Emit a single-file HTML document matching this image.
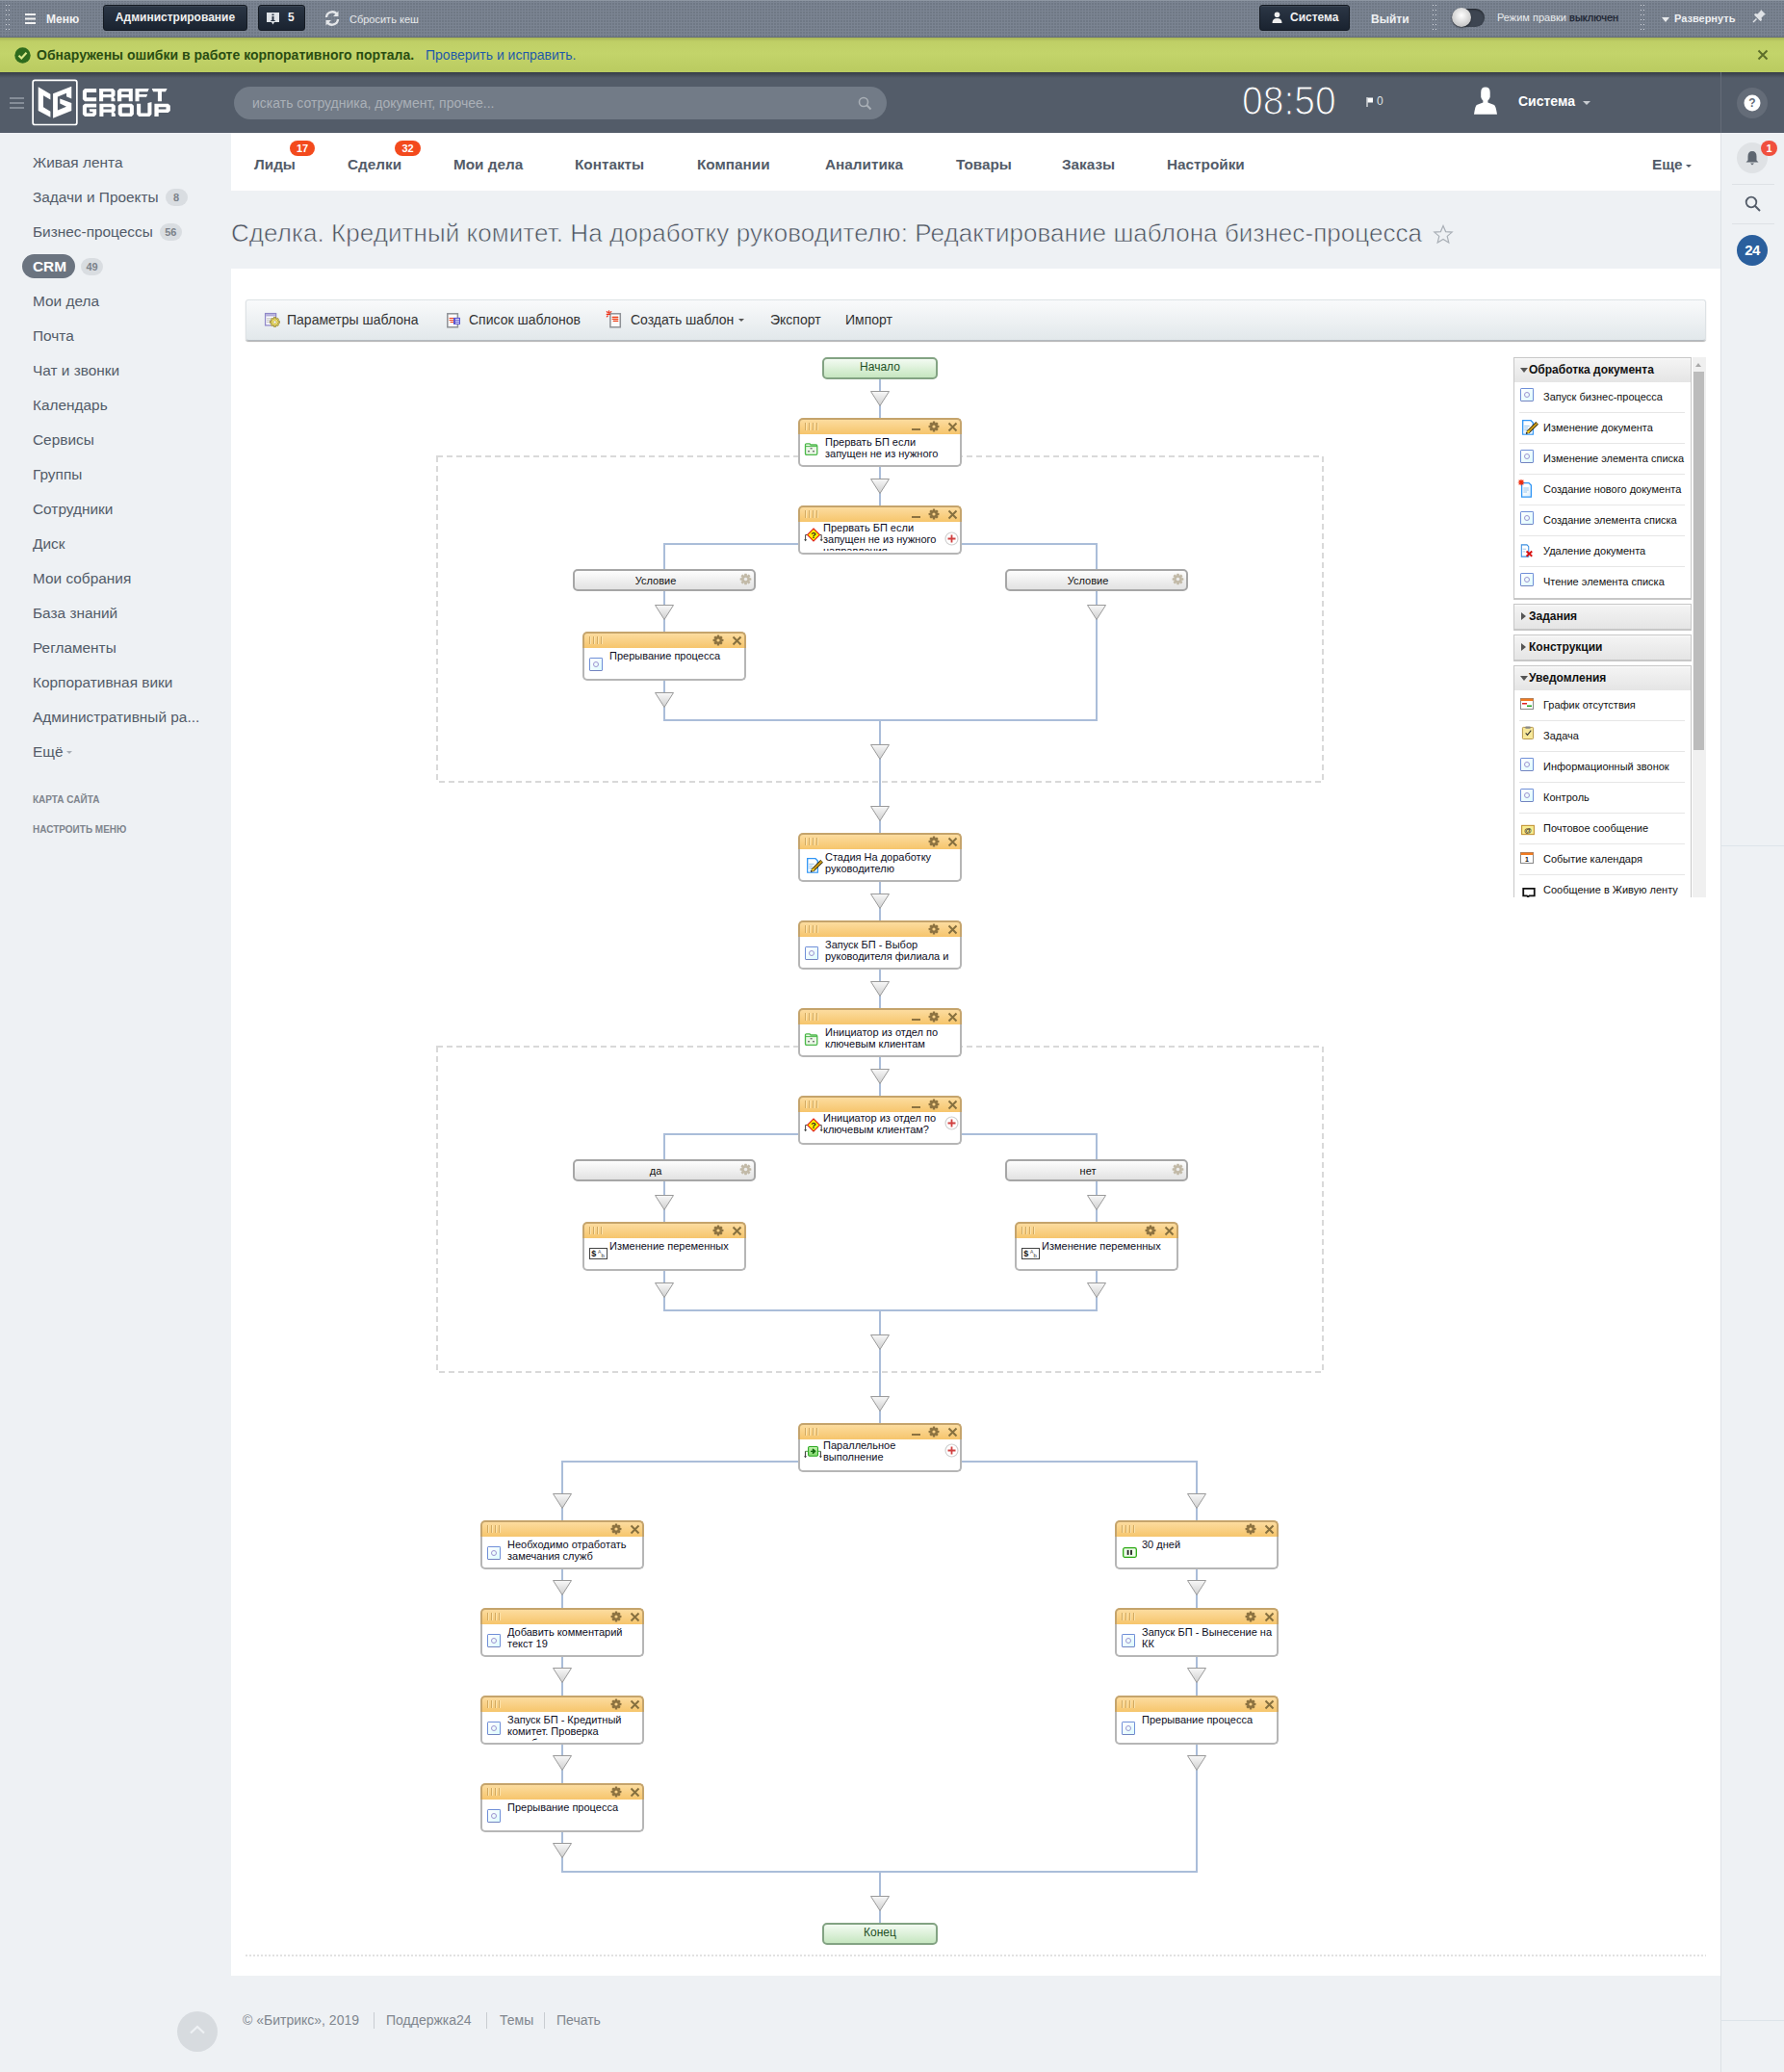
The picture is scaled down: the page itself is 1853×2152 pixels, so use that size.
<!DOCTYPE html>
<html><head><meta charset="utf-8">
<style>
*{box-sizing:border-box;margin:0;padding:0}
html,body{width:1853px;height:2152px;overflow:hidden}
body{background:#eef1f4;font-family:"Liberation Sans",sans-serif;position:relative}
.abs{position:absolute}
/* top admin panel */
#tp{position:absolute;left:0;top:0;width:1853px;height:39px;box-shadow:inset 0 1px 0 #8d96a2;background-color:#7b8492;
 background-image:radial-gradient(circle at 1px 1px,#6f7885 0.8px,transparent 1px);background-size:3px 3px;border-bottom:1px solid #666f7b}
.tpsep{position:absolute;top:3px;width:5px;height:32px;background-image:radial-gradient(circle,rgba(225,228,232,0.85) 0.75px,transparent 1px);background-size:3px 5px}
.dbtn{position:absolute;top:5px;height:27px;background:linear-gradient(#2b3645,#1a2330);border-radius:3px;border:1px solid #141a22;box-shadow:inset 0 1px 0 rgba(255,255,255,0.08);color:#f0f0f0;font-weight:bold;font-size:12px;line-height:25px}
.tptx{position:absolute;color:#e6e8ea;font-size:12px}
/* green bar */
#gb{position:absolute;left:0;top:39px;width:1853px;height:36px;background:linear-gradient(#a7b457 0,#bfcf66 4px,#c3d46a 45%,#bacb60 100%);box-shadow:0 1px 2px rgba(0,0,0,0.25)}
/* header */
#hd{position:absolute;left:0;top:75px;width:1853px;height:63px;background:#535c69}
#hd:before{content:"";position:absolute;left:0;top:0;right:0;height:6px;background:linear-gradient(rgba(30,35,42,0.55),rgba(30,35,42,0))}
/* sidebar */
.mi{position:absolute;left:34px;font-size:15.4px;color:#535c69;line-height:22px;white-space:nowrap}
.cnt{display:inline-block;vertical-align:top;margin-left:7px;margin-top:2px;height:18px;line-height:18px;min-width:23px;text-align:center;padding:0 5px;border-radius:9px;background:#d9dde1;color:#7c828a;font-size:11px;font-weight:bold}
/* nav */
#nav{position:absolute;left:240px;top:138px;width:1547px;height:60px;background:#fff}
.ni{position:absolute;top:24px;font-size:15.3px;font-weight:bold;color:#535c69;line-height:18px;white-space:nowrap}
.badge{position:absolute;height:16px;border-radius:8px;background:#f34a1d;color:#fff;font-size:11px;font-weight:bold;line-height:16px;text-align:center}
/* right panel */
#rp{position:absolute;left:1787px;top:138px;width:66px;height:2014px;border-left:1px solid #dde1e5;background:#eef1f4}
/* content */
#ct{position:absolute;left:240px;top:279px;width:1547px;height:1773px;background:#fff}
#tb{position:absolute;left:255px;top:311px;width:1517px;height:43px;border-radius:3px;background:linear-gradient(#f9fafb,#e2e8eb);border:1px solid #dde2e5;border-bottom-color:#b4babf;box-shadow:0 1px 1px rgba(0,0,0,0.3)}
.tbi{position:absolute;top:12px;font-size:14px;color:#333;white-space:nowrap;line-height:16px}
/* palette */
#pal{position:absolute;left:1572px;top:371px;width:200px;height:561px;overflow:hidden}
.pg{position:absolute;left:0;width:185px;border:1px solid #c7c7c7;border-bottom-width:2px;background:#fff}
.ph{height:25px;background:linear-gradient(#fafafa,#f3f3f3 2px,#e5e5e5);font-size:12px;font-weight:bold;color:#111;line-height:25px;padding-left:15px;position:relative;white-space:nowrap}
.ph i{position:absolute;left:6px;top:10px;width:0;height:0;border-left:4px solid transparent;border-right:4px solid transparent;border-top:5px solid #555}
.ph i.r{left:7px;top:8px;border-top:4px solid transparent;border-bottom:4px solid transparent;border-left:5px solid #555;border-right:0}
.pi{position:relative;height:32px;margin:0 6px 0 5px;border-bottom:1px solid #e6e6e6;font-size:11px;color:#111;line-height:30px;padding-left:25px;white-space:nowrap}
.pi:last-child{border-bottom:0}
.pic{position:absolute;left:2px;top:5px;width:14px;height:14px}
/* diagram */
.dsvg{position:absolute;left:0;top:0}
.box{position:absolute;width:170px;height:51px}
.bh{position:absolute;left:0;top:0;width:170px;height:17px;border:2px solid #c5a46c;border-bottom:0;border-radius:5px 5px 0 0;background:linear-gradient(#fcdc9f,#f6c56c)}
.bh s{position:absolute;top:3px;width:1px;height:8px;background:#d2aa62;box-shadow:1px 0 0 #fde4ac}
.bh .mn{position:absolute;left:116px;top:9px;width:9px;height:2px;background:#8c7240}
.gi{position:absolute}
.bh .gi{margin-left:-2px;margin-top:-2px}
.cl{position:absolute;left:153px;top:2px}
.bb{position:absolute;left:0;top:17px;width:170px;height:34px;border:2px solid #b6b6b6;border-top:0;border-radius:0 0 5px 5px;background:#fff}
.bt{position:absolute;left:28px;top:19px;width:137px;height:28px;overflow:hidden;font-size:11px;line-height:12px;color:#0e0e1e}
.bt2{left:26px;top:16.5px;width:124px;height:30px}
.ic{position:absolute}
.ic-blue{position:absolute;left:7px;top:27px;width:14px;height:14px;border:1px solid #6f8fd8;border-bottom-color:#7384c0;background:linear-gradient(135deg,#fff,#ddfbfd);border-radius:1.5px}
.ic-blue b{position:absolute;left:3px;top:3px;width:6px;height:6px;border:1px solid #9d94d0;border-radius:50%}
.pl{position:absolute;left:152px;top:28px}
.cond{position:absolute;width:190px;height:23px;border:2px solid #a6a6a6;border-radius:5px;background:linear-gradient(#fdfdfd,#e2e2e2);font-size:11px;color:#111;line-height:21px}
.cond span{position:absolute;left:0;width:168px;text-align:center;top:0}
.cond .gi{margin-left:-2px;margin-top:-1px}
.se{position:absolute;width:120px;border:2px solid #83a383;border-radius:5px;background:linear-gradient(#f3fbf2,#c6e6c0);font-size:12px;color:#1d4f24;text-align:center;line-height:17px!important}
/* footer */
.ft{position:absolute;top:2090px;font-size:14px;color:#80868e;white-space:nowrap;line-height:17px}
.fsep{position:absolute;top:2090px;width:1px;height:17px;background:#c9cdd1}
</style></head><body>

<!-- top admin panel -->
<div id="tp">
 <div class="tpsep" style="left:5px"></div>
 <svg class="abs" style="left:26px;top:14px" width="12" height="11" viewBox="0 0 12 11"><rect y="0" width="11" height="2" fill="#f2f2f2"/><rect y="4.5" width="11" height="2" fill="#f2f2f2"/><rect y="9" width="11" height="2" fill="#f2f2f2"/></svg>
 <div class="tptx" style="left:48px;top:13px;font-weight:bold;font-size:12px;color:#f2f2f2">Меню</div>
 <div class="dbtn" style="left:107px;width:150px;text-align:center">Администрирование</div>
 <div class="dbtn" style="left:268px;width:49px"><svg class="abs" style="left:7px;top:6px" width="15" height="15" viewBox="0 0 15 15"><path d="M1 1 H14 V11 H9 L7.5 13.5 L6 11 H1 Z" fill="#dfe3e7"/><rect x="6.5" y="5" width="2" height="5" fill="#2a3544"/><rect x="6.5" y="2.5" width="2" height="1.6" fill="#2a3544"/><rect x="5.3" y="9" width="4.4" height="1" fill="#2a3544"/></svg><span class="abs" style="left:30px;top:0px;font-size:12px">5</span></div>
 <svg class="abs" style="left:336px;top:10px" width="18" height="18" viewBox="0 0 18 18"><path d="M3 8 A6 6 0 0 1 14 5" stroke="#e4e6e9" stroke-width="2.3" fill="none"/><path d="M15.5 1.5 V7 H10 Z" fill="#e4e6e9"/><path d="M15 10 A6 6 0 0 1 4 13" stroke="#e4e6e9" stroke-width="2.3" fill="none"/><path d="M2.5 16.5 V11 H8 Z" fill="#e4e6e9"/></svg>
 <div class="tptx" style="left:363px;top:14px;font-size:11px">Сбросить кеш</div>

 <div class="dbtn" style="left:1308px;width:94px"><svg class="abs" style="left:12px;top:6px" width="11" height="12" viewBox="0 0 11 12"><circle cx="5.5" cy="3.2" r="2.8" fill="#eee"/><path d="M0.5 12 Q0.5 7 5.5 7 Q10.5 7 10.5 12 Z" fill="#eee"/></svg><span class="abs" style="left:31px;top:0px;font-size:12px">Система</span></div>
 <div class="tptx" style="left:1424px;top:13px;font-weight:bold;font-size:12px;color:#eef0f2">Выйти</div>
 <div class="tpsep" style="left:1487px"></div>
 <div class="abs" style="left:1508px;top:9px;width:34px;height:19px;border-radius:10px;background:#3d4551;box-shadow:inset 0 1px 2px rgba(0,0,0,0.5)"></div>
 <div class="abs" style="left:1508px;top:8px;width:20px;height:20px;border-radius:50%;background:radial-gradient(circle at 50% 40%,#ffffff,#c9c9c9 70%,#a9a9a9);box-shadow:0 1px 2px rgba(0,0,0,0.5)"></div>
 <div class="tptx" style="left:1555px;top:12px;font-size:11px;color:#e8eaec">Режим правки <span style="color:#1a2230;-webkit-text-stroke:0.25px #1a2230">выключен</span></div>
 <div class="tpsep" style="left:1703px"></div>
 <div class="abs" style="left:1726px;top:18px;width:0;height:0;border-left:4px solid transparent;border-right:4px solid transparent;border-top:5px solid #e8eaec"></div>
 <div class="tptx" style="left:1739px;top:13px;font-weight:bold;font-size:11px;color:#eef0f2">Развернуть</div>
 <svg class="abs" style="left:1820px;top:9px" width="15" height="15" viewBox="0 0 15 15"><path d="M9 1 L14 6 L12.5 6.5 L9.5 9.5 L10 12 L8.5 13 L2 6.5 L3 5 L5.5 5.5 L8.5 2.5 Z" fill="#dfe2e6"/><path d="M4.5 10.5 L1 14" stroke="#dfe2e6" stroke-width="1.5"/></svg>
</div>

<!-- green bar -->
<div id="gb">
 <svg class="abs" style="left:15px;top:10px" width="17" height="17" viewBox="0 0 17 17"><circle cx="8.5" cy="8.5" r="8.2" fill="#2e6b1d"/><path d="M4.5 8.8 L7.3 11.5 L12.5 5.8" stroke="#d8e88a" stroke-width="2.2" fill="none"/></svg>
 <div class="abs" style="left:38px;top:10px;font-size:14px;font-weight:bold;color:#2a4d12;line-height:17px;white-space:nowrap">Обнаружены ошибки в работе корпоративного портала.</div>
 <div class="abs" style="left:442px;top:10px;font-size:14px;color:#1f5aa8;line-height:17px;white-space:nowrap">Проверить и исправить.</div>
 <svg class="abs" style="left:1825px;top:12px" width="12" height="12" viewBox="0 0 12 12"><path d="M1.5 1.5 L10.5 10.5 M10.5 1.5 L1.5 10.5" stroke="#5d6e2a" stroke-width="2"/></svg>
</div>

<!-- header -->
<div id="hd">
 <div class="abs" style="left:10px;top:26px;width:15px;height:2px;background:#858d98"></div>
 <div class="abs" style="left:10px;top:31px;width:15px;height:2px;background:#858d98"></div>
 <div class="abs" style="left:10px;top:36px;width:15px;height:2px;background:#858d98"></div>
 <svg class="abs" style="left:33px;top:7px" width="48" height="49" viewBox="240 28 500 505">
  <rect x="252" y="40" width="476" height="480" rx="22" fill="none" stroke="#fff" stroke-width="18"/>
  <path d="M310 112 L442 190 L442 250 L365 205 L365 330 L442 378 L442 440 L310 368 Z" fill="#fff"/>
  <path d="M470 185 L670 105 L670 240 L615 215 L615 180 L520 218 L520 365 L615 325 L545 290 L545 240 L670 285 L670 370 L470 450 Z" fill="#fff"/>
 </svg>
 <svg class="abs" style="left:84px;top:13px" width="96" height="36" viewBox="0 0 1784 669"><path fill="#fff" fill-rule="evenodd" d="M75 75 H300 V150 H110 V245 H300 V320 H75 L35 280 V115 Z
M355 75 H620 L660 115 V210 L630 240 L660 270 V320 H585 V245 H430 V320 H355 Z M430 135 V185 H585 V135 Z
M745 75 H1000 V320 H925 V245 H785 V320 H705 V115 Z M785 135 V185 H925 V135 Z
M1050 75 H1315 L1290 135 H1125 V185 H1285 L1265 235 H1125 V320 H1050 Z
M1370 75 H1665 L1635 135 H1560 V320 H1485 V135 H1395 Z
M75 365 H300 V435 H110 V550 H230 V520 H175 L160 470 H300 V572 L260 612 H75 L35 572 V405 Z
M360 365 H625 L665 405 V500 L635 530 L665 560 V612 H590 V535 H435 V612 H360 Z M435 430 V475 H590 V430 Z
M760 365 H980 L1020 405 V572 L980 612 H760 L720 572 V405 Z M795 435 V550 H945 V435 Z
M1080 365 H1155 V550 H1290 V355 L1365 335 V572 L1325 612 H1120 L1080 572 Z
M1420 365 H1685 L1725 405 V500 L1685 540 H1500 V612 H1420 Z M1500 430 V475 H1645 V430 Z"/></svg>
 <div class="abs" style="left:243px;top:15px;width:678px;height:34px;border-radius:17px;background:#727b87"></div>
 <div class="abs" style="left:262px;top:24px;font-size:14px;color:#aab0b7;line-height:16px;white-space:nowrap">искать сотрудника, документ, прочее...</div>
 <svg class="abs" style="left:891px;top:25px" width="15" height="15" viewBox="0 0 15 15"><circle cx="6" cy="6" r="4.5" stroke="#a9afb6" stroke-width="1.6" fill="none"/><path d="M9.3 9.3 L13.5 13.5" stroke="#a9afb6" stroke-width="2"/></svg>
 <div class="abs" style="left:1290px;top:9px;font-size:39px;color:#fff;line-height:44px;white-space:nowrap;-webkit-text-stroke:1.1px #535c69;transform:scaleY(1.075);transform-origin:0 34px">08:50</div>
 <svg class="abs" style="left:1419px;top:26px" width="8" height="10" viewBox="0 0 8 10"><path d="M1 0 V10" stroke="#fff" stroke-width="1.1"/><path d="M1.5 0.5 H7 V5.5 H1.5 Z" fill="#fff"/></svg>
 <div class="abs" style="left:1430px;top:23px;font-size:12px;color:#dfe2e5;line-height:14px">0</div>
 <svg class="abs" style="left:1531px;top:15px" width="25" height="29" viewBox="0 0 25 29"><path d="M11.9 0.6 Q16.7 0.6 16.7 6 V10.8 Q16.2 13 14.4 14.5 V16.6 L21 19 Q22.6 19.8 24 28.8 H0 Q1.3 19.8 2.8 19 L9.4 16.6 V14.5 Q7.6 13 7.2 10.8 V6 Q7.2 0.6 11.9 0.6 Z" fill="#fff"/></svg>
 <div class="abs" style="left:1577px;top:22px;font-size:14px;font-weight:bold;color:#fff;line-height:16px">Система</div>
 <div class="abs" style="left:1644px;top:30px;width:0;height:0;border-left:4px solid transparent;border-right:4px solid transparent;border-top:4px solid #c8ccd1"></div>
 <div class="abs" style="left:1787px;top:0;width:1px;height:63px;background:#646c78"></div>
 <div class="abs" style="left:1804px;top:16px;width:32px;height:32px;border-radius:50%;background:#646c78"></div>
 <svg class="abs" style="left:1811px;top:23px" width="18" height="18" viewBox="0 0 18 18"><circle cx="9" cy="9" r="8.5" fill="#fff"/><text x="9" y="13.3" text-anchor="middle" font-size="12" font-weight="bold" font-family="Liberation Sans" fill="#646c78">?</text></svg>
</div>

<!-- sidebar -->
<div class="mi" style="top:158px">Живая лента</div>
<div class="mi" style="top:194px">Задачи и Проекты<span class="cnt">8</span></div>
<div class="mi" style="top:230px">Бизнес-процессы<span class="cnt">56</span></div>
<div class="abs" style="left:23px;top:264px;width:55px;height:25px;border-radius:13px;background:#6b7480"></div>
<div class="mi" style="top:266px;color:#fff;font-weight:bold;left:34px">CRM</div>
<div class="abs cnt" style="left:84px;top:268px;margin:0">49</div>
<div class="mi" style="top:302px">Мои дела</div>
<div class="mi" style="top:338px">Почта</div>
<div class="mi" style="top:374px">Чат и звонки</div>
<div class="mi" style="top:410px">Календарь</div>
<div class="mi" style="top:446px">Сервисы</div>
<div class="mi" style="top:482px">Группы</div>
<div class="mi" style="top:518px">Сотрудники</div>
<div class="mi" style="top:554px">Диск</div>
<div class="mi" style="top:590px">Мои собрания</div>
<div class="mi" style="top:626px">База знаний</div>
<div class="mi" style="top:662px">Регламенты</div>
<div class="mi" style="top:698px">Корпоративная вики</div>
<div class="mi" style="top:734px">Административный ра...</div>
<div class="mi" style="top:770px">Ещё</div>
<div class="abs" style="left:69px;top:780px;width:0;height:0;border-left:3px solid transparent;border-right:3px solid transparent;border-top:3px solid #a8aeb5"></div>
<div class="abs" style="left:34px;top:824px;font-size:10px;font-weight:bold;color:#7f858d;line-height:13px">КАРТА САЙТА</div>
<div class="abs" style="left:34px;top:855px;font-size:10px;font-weight:bold;color:#7f858d;line-height:13px">НАСТРОИТЬ МЕНЮ</div>

<!-- nav -->
<div id="nav"></div>
<div class="ni" style="left:264px;top:162px">Лиды</div>
<div class="badge" style="left:301px;top:146px;width:26px">17</div>
<div class="ni" style="left:361px;top:162px">Сделки</div>
<div class="badge" style="left:410px;top:146px;width:27px">32</div>
<div class="ni" style="left:471px;top:162px">Мои дела</div>
<div class="ni" style="left:597px;top:162px">Контакты</div>
<div class="ni" style="left:724px;top:162px">Компании</div>
<div class="ni" style="left:857px;top:162px">Аналитика</div>
<div class="ni" style="left:993px;top:162px">Товары</div>
<div class="ni" style="left:1103px;top:162px">Заказы</div>
<div class="ni" style="left:1212px;top:162px">Настройки</div>
<div class="ni" style="left:1716px;top:162px">Еще</div>
<div class="abs" style="left:1751px;top:171px;width:0;height:0;border-left:3px solid transparent;border-right:3px solid transparent;border-top:3px solid #535c69"></div>

<!-- right panel -->
<div id="rp">
 <div class="abs" style="left:16px;top:10px;width:32px;height:32px;border-radius:50%;background:#dfe2e5"></div>
 <svg class="abs" style="left:25px;top:156px;display:none" width="1" height="1"></svg>
 <svg class="abs" style="left:25px;top:18px" width="14" height="16" viewBox="0 0 14 16"><path d="M7 1 Q11.5 1 11.5 6.5 V10.5 L13.5 12.5 H0.5 L2.5 10.5 V6.5 Q2.5 1 7 1 Z" fill="#5e6670"/><path d="M5 13.5 H9 L7 15.5 Z" fill="#5e6670"/></svg>
 <div class="badge" style="left:41px;top:8px;width:17px;height:16px;border-radius:8px;background:#f0503e;font-size:11px">1</div>
 <div class="abs" style="left:11px;top:53px;width:44px;height:1px;background:#dde1e5"></div>
 <svg class="abs" style="left:24px;top:65px" width="18" height="18" viewBox="0 0 18 18"><circle cx="7" cy="7" r="5.3" stroke="#535c69" stroke-width="1.8" fill="none"/><path d="M10.8 10.8 L16 16" stroke="#535c69" stroke-width="2"/></svg>
 <div class="abs" style="left:11px;top:94px;width:44px;height:1px;background:#dde1e5"></div>
 <div class="abs" style="left:16px;top:106px;width:32px;height:32px;border-radius:50%;background:#2a5f9d;color:#fff;font-weight:bold;font-size:15px;line-height:32px;text-align:center;letter-spacing:-0.5px">24</div>
 <div class="abs" style="left:0;top:740px;width:66px;height:1px;background:#dde4e9"></div>
 <div class="abs" style="left:0;top:1960px;width:66px;height:1px;background:#dde4e9"></div>
</div>

<!-- title -->
<div class="abs" style="left:240px;top:227px;font-size:26px;color:#4a525e;line-height:30px;white-space:nowrap;letter-spacing:0.06px;-webkit-text-stroke:0.6px #eef1f4">Сделка. Кредитный комитет. На доработку руководителю: Редактирование шаблона бизнес-процесса</div>
<svg class="abs" style="left:1488px;top:233px" width="22" height="21" viewBox="0 0 22 21"><path d="M11 1.5 L13.6 7.6 L20.2 8.1 L15.2 12.4 L16.8 18.9 L11 15.4 L5.2 18.9 L6.8 12.4 L1.8 8.1 L8.4 7.6 Z" fill="none" stroke="#a9afb6" stroke-width="1.2"/></svg>

<!-- content -->
<div id="ct"></div>
<div id="tb">
 <svg class="abs" style="left:-1px;top:-1px" width="400" height="43" viewBox="0 0 400 43">
  <rect x="20.6" y="14.6" width="11" height="12.3" fill="#fff" stroke="#8f88c8" stroke-width="1.3"/>
  <rect x="21.3" y="15.3" width="9.6" height="2.2" fill="#8f88c8" opacity="0.7"/>
  <path d="M22 19.8 H29 M22 21.8 H27 M22 23.8 H26" stroke="#aaa" stroke-width="0.8"/>
  <g transform="translate(30.5 23.5)"><g fill="#f3e36a" stroke="#8a7a30" stroke-width="0.6"><rect x="-1.2" y="-5" width="2.4" height="3" transform="rotate(0)"/><rect x="-1.2" y="-5" width="2.4" height="3" transform="rotate(45)"/><rect x="-1.2" y="-5" width="2.4" height="3" transform="rotate(90)"/><rect x="-1.2" y="-5" width="2.4" height="3" transform="rotate(135)"/><rect x="-1.2" y="-5" width="2.4" height="3" transform="rotate(180)"/><rect x="-1.2" y="-5" width="2.4" height="3" transform="rotate(225)"/><rect x="-1.2" y="-5" width="2.4" height="3" transform="rotate(270)"/><rect x="-1.2" y="-5" width="2.4" height="3" transform="rotate(315)"/><circle r="3.7"/></g><circle r="1.5" fill="#fff" stroke="#8a7a30" stroke-width="0.5"/></g>
  <rect x="209.8" y="14.8" width="10.6" height="14" fill="#fbfbfb" stroke="#8e9196" stroke-width="1.5"/>
  <path d="M212 19.5 H217 M212 21.5 H217 M213 23.5 H217" stroke="#ee3a10" stroke-width="1.1" stroke-linecap="round"/>
  <rect x="216" y="18.9" width="7" height="7.1" fill="#5a55d0"/>
  <path d="M218 20.6 H222 M218 22.6 H222 M218 24.6 H222" stroke="#fff" stroke-width="0.9"/>
  <rect x="378.9" y="14.8" width="10.4" height="14" fill="#fbfbfb" stroke="#8e9196" stroke-width="1.5"/>
  <path d="M381.2 18.4 H386.8 M381.2 20.4 H386.8 M382.2 22.4 H386.8" stroke="#ee3a10" stroke-width="1.1" stroke-linecap="round"/>
  <path d="M375.2 15.3 H378.6 M377.5 11.8 V14 M375.3 12.7 L376.2 13.6 M379.8 12.7 L378.9 13.6 M375.3 17.9 L376.2 17" stroke="#ee2a10" stroke-width="1.2" stroke-linecap="round"/>
 </svg>
 <div class="tbi" style="left:42px">Параметры шаблона</div>
 <div class="tbi" style="left:231px">Список шаблонов</div>
 <div class="tbi" style="left:399px">Создать шаблон</div>
 <div class="abs" style="left:511px;top:19px;width:0;height:0;border-left:3px solid transparent;border-right:3px solid transparent;border-top:3px solid #555"></div>
 <div class="tbi" style="left:544px">Экспорт</div>
 <div class="tbi" style="left:622px">Импорт</div>
</div>

<svg class="dsvg" width="1853" height="2152"><defs><linearGradient id="ag" x1="0" y1="0" x2="0" y2="1"><stop offset="0" stop-color="#f8f8f8"/><stop offset="1" stop-color="#cfcfcf"/></linearGradient></defs><rect x="913" y="394" width="2" height="40" fill="#aabdd9"/><polygon points="904.5,406.5 923.5,406.5 914,421.5" fill="url(#ag)" stroke="#9a9a9a" stroke-width="1"/><rect x="913" y="485" width="2" height="40" fill="#aabdd9"/><polygon points="904.5,497.5 923.5,497.5 914,512.5" fill="url(#ag)" stroke="#9a9a9a" stroke-width="1"/><rect x="454" y="474" width="920" height="338" fill="none" stroke="#d9d9d9" stroke-width="2" stroke-dasharray="6 4"/><rect x="689" y="564" width="451" height="2" fill="#aabdd9"/><rect x="689" y="565" width="2" height="184" fill="#aabdd9"/><rect x="1138" y="565" width="2" height="184" fill="#aabdd9"/><polygon points="680.5,628.5 699.5,628.5 690,643.5" fill="url(#ag)" stroke="#9a9a9a" stroke-width="1"/><polygon points="1129.5,628.5 1148.5,628.5 1139,643.5" fill="url(#ag)" stroke="#9a9a9a" stroke-width="1"/><polygon points="680.5,719.5 699.5,719.5 690,734.5" fill="url(#ag)" stroke="#9a9a9a" stroke-width="1"/><rect x="689" y="747" width="451" height="2" fill="#aabdd9"/><rect x="913" y="748" width="2" height="117" fill="#aabdd9"/><polygon points="904.5,773.5 923.5,773.5 914,788.5" fill="url(#ag)" stroke="#9a9a9a" stroke-width="1"/><polygon points="904.5,837.5 923.5,837.5 914,852.5" fill="url(#ag)" stroke="#9a9a9a" stroke-width="1"/><rect x="913" y="916" width="2" height="40" fill="#aabdd9"/><polygon points="904.5,928.5 923.5,928.5 914,943.5" fill="url(#ag)" stroke="#9a9a9a" stroke-width="1"/><rect x="913" y="1007" width="2" height="40" fill="#aabdd9"/><polygon points="904.5,1019.5 923.5,1019.5 914,1034.5" fill="url(#ag)" stroke="#9a9a9a" stroke-width="1"/><rect x="913" y="1098" width="2" height="40" fill="#aabdd9"/><polygon points="904.5,1110.5 923.5,1110.5 914,1125.5" fill="url(#ag)" stroke="#9a9a9a" stroke-width="1"/><rect x="454" y="1087" width="920" height="338" fill="none" stroke="#d9d9d9" stroke-width="2" stroke-dasharray="6 4"/><rect x="689" y="1177" width="451" height="2" fill="#aabdd9"/><rect x="689" y="1178" width="2" height="184" fill="#aabdd9"/><rect x="1138" y="1178" width="2" height="184" fill="#aabdd9"/><polygon points="680.5,1241.5 699.5,1241.5 690,1256.5" fill="url(#ag)" stroke="#9a9a9a" stroke-width="1"/><polygon points="1129.5,1241.5 1148.5,1241.5 1139,1256.5" fill="url(#ag)" stroke="#9a9a9a" stroke-width="1"/><polygon points="680.5,1332.5 699.5,1332.5 690,1347.5" fill="url(#ag)" stroke="#9a9a9a" stroke-width="1"/><polygon points="1129.5,1332.5 1148.5,1332.5 1139,1347.5" fill="url(#ag)" stroke="#9a9a9a" stroke-width="1"/><rect x="689" y="1360" width="451" height="2" fill="#aabdd9"/><rect x="913" y="1361" width="2" height="117" fill="#aabdd9"/><polygon points="904.5,1386.5 923.5,1386.5 914,1401.5" fill="url(#ag)" stroke="#9a9a9a" stroke-width="1"/><polygon points="904.5,1450.5 923.5,1450.5 914,1465.5" fill="url(#ag)" stroke="#9a9a9a" stroke-width="1"/><rect x="583" y="1517" width="661" height="2" fill="#aabdd9"/><rect x="583" y="1518" width="2" height="426" fill="#aabdd9"/><rect x="1242" y="1518" width="2" height="426" fill="#aabdd9"/><polygon points="574.5,1551.5 593.5,1551.5 584,1566.5" fill="url(#ag)" stroke="#9a9a9a" stroke-width="1"/><polygon points="1233.5,1551.5 1252.5,1551.5 1243,1566.5" fill="url(#ag)" stroke="#9a9a9a" stroke-width="1"/><polygon points="574.5,1641.5 593.5,1641.5 584,1656.5" fill="url(#ag)" stroke="#9a9a9a" stroke-width="1"/><polygon points="574.5,1732.5 593.5,1732.5 584,1747.5" fill="url(#ag)" stroke="#9a9a9a" stroke-width="1"/><polygon points="574.5,1823.5 593.5,1823.5 584,1838.5" fill="url(#ag)" stroke="#9a9a9a" stroke-width="1"/><polygon points="574.5,1914.5 593.5,1914.5 584,1929.5" fill="url(#ag)" stroke="#9a9a9a" stroke-width="1"/><polygon points="1233.5,1641.5 1252.5,1641.5 1243,1656.5" fill="url(#ag)" stroke="#9a9a9a" stroke-width="1"/><polygon points="1233.5,1732.5 1252.5,1732.5 1243,1747.5" fill="url(#ag)" stroke="#9a9a9a" stroke-width="1"/><polygon points="1233.5,1823.5 1252.5,1823.5 1243,1838.5" fill="url(#ag)" stroke="#9a9a9a" stroke-width="1"/><rect x="583" y="1943" width="661" height="2" fill="#aabdd9"/><rect x="913" y="1944" width="2" height="54" fill="#aabdd9"/><polygon points="904.5,1969.5 923.5,1969.5 914,1984.5" fill="url(#ag)" stroke="#9a9a9a" stroke-width="1"/></svg>
<div class="se" style="left:854px;top:371px;height:23px;line-height:19px">Начало</div><div class="box" style="left:829px;top:434px"><div class="bh"><s style="left:5px"></s><s style="left:9px"></s><s style="left:13px"></s><s style="left:17px"></s><u class="mn"></u><svg class="gi" style="left:135px;top:3px" width="12" height="12" viewBox="-6 -6 12 12"><g fill="#8c7240"><rect x="-1.25" y="-5.4" width="2.5" height="3.2" rx="0.5" transform="rotate(0)"/><rect x="-1.25" y="-5.4" width="2.5" height="3.2" rx="0.5" transform="rotate(45)"/><rect x="-1.25" y="-5.4" width="2.5" height="3.2" rx="0.5" transform="rotate(90)"/><rect x="-1.25" y="-5.4" width="2.5" height="3.2" rx="0.5" transform="rotate(135)"/><rect x="-1.25" y="-5.4" width="2.5" height="3.2" rx="0.5" transform="rotate(180)"/><rect x="-1.25" y="-5.4" width="2.5" height="3.2" rx="0.5" transform="rotate(225)"/><rect x="-1.25" y="-5.4" width="2.5" height="3.2" rx="0.5" transform="rotate(270)"/><rect x="-1.25" y="-5.4" width="2.5" height="3.2" rx="0.5" transform="rotate(315)"/><circle r="3.9"/></g><circle r="1.6" fill="#fad187"/></svg><svg class="cl" width="11" height="11" viewBox="0 0 11 11"><path d="M1.5 1.5 L9.5 9.5 M9.5 1.5 L1.5 9.5" stroke="#86703f" stroke-width="2"/></svg></div><div class="bb"></div><svg class="ic" style="left:6px;top:26px" width="15" height="13" viewBox="0 0 15 13"><path d="M1.5 3.5 V2 Q1.5 0.8 2.7 0.8 H6 L7 2 H12.5 Q13.8 2 13.8 3.3 V11 Q13.8 12.3 12.5 12.3 H2.7 Q1.5 12.3 1.5 11 Z" fill="#eaf7e6" stroke="#4cb84a" stroke-width="1.3"/><path d="M1.5 3.6 H13.8" stroke="#4cb84a" stroke-width="1"/><rect x="6.6" y="5" width="2" height="1.4" fill="#777"/><rect x="4" y="8" width="2" height="1.4" fill="#777"/><rect x="9" y="8" width="2" height="1.4" fill="#777"/></svg><div class="bt">Прервать БП если запущен не из нужного</div></div><div class="box" style="left:829px;top:525px"><div class="bh"><s style="left:5px"></s><s style="left:9px"></s><s style="left:13px"></s><s style="left:17px"></s><u class="mn"></u><svg class="gi" style="left:135px;top:3px" width="12" height="12" viewBox="-6 -6 12 12"><g fill="#8c7240"><rect x="-1.25" y="-5.4" width="2.5" height="3.2" rx="0.5" transform="rotate(0)"/><rect x="-1.25" y="-5.4" width="2.5" height="3.2" rx="0.5" transform="rotate(45)"/><rect x="-1.25" y="-5.4" width="2.5" height="3.2" rx="0.5" transform="rotate(90)"/><rect x="-1.25" y="-5.4" width="2.5" height="3.2" rx="0.5" transform="rotate(135)"/><rect x="-1.25" y="-5.4" width="2.5" height="3.2" rx="0.5" transform="rotate(180)"/><rect x="-1.25" y="-5.4" width="2.5" height="3.2" rx="0.5" transform="rotate(225)"/><rect x="-1.25" y="-5.4" width="2.5" height="3.2" rx="0.5" transform="rotate(270)"/><rect x="-1.25" y="-5.4" width="2.5" height="3.2" rx="0.5" transform="rotate(315)"/><circle r="3.9"/></g><circle r="1.6" fill="#fad187"/></svg><svg class="cl" width="11" height="11" viewBox="0 0 11 11"><path d="M1.5 1.5 L9.5 9.5 M9.5 1.5 L1.5 9.5" stroke="#86703f" stroke-width="2"/></svg></div><div class="bb"></div><svg class="ic" style="left:6px;top:23px" width="20" height="16" viewBox="0 0 20 16"><path d="M1.6 7.5 V13.3 M18.2 7.5 V13.3 M1.6 7.5 H4 M16 7.5 H18.2" stroke="#444" stroke-width="1" fill="none"/><path d="M0 12.2 L1.6 14.3 L3.2 12.2 Z M16.6 12.2 L18.2 14.3 L19.8 12.2 Z" fill="#444"/><path d="M10 1 L16.5 7.5 L10 14 L3.5 7.5 Z" fill="#fff200" stroke="#e0221a" stroke-width="1.1"/><text x="10" y="10.9" font-size="9" font-weight="bold" font-family="Liberation Sans" text-anchor="middle" fill="#222">?</text></svg><div class="bt bt2">Прервать БП если запущен не из нужного направления</div><svg class="pl" style="top:27.0px" width="15" height="15" viewBox="0 0 15 15"><circle cx="7.5" cy="7.5" r="6.5" fill="#fff" stroke="#d0d0d0" stroke-width="1.2"/><path d="M7.5 3.5 V11.5 M3.5 7.5 H11.5" stroke="#d04040" stroke-width="1.8"/></svg></div><div class="cond" style="left:595px;top:591px"><span>Условие</span><svg class="gi" style="left:172.5px;top:3.0px" width="13.0" height="13.0" viewBox="-6 -6 12 12"><g fill="#c2baa8"><rect x="-1.25" y="-5.4" width="2.5" height="3.2" rx="0.5" transform="rotate(0)"/><rect x="-1.25" y="-5.4" width="2.5" height="3.2" rx="0.5" transform="rotate(45)"/><rect x="-1.25" y="-5.4" width="2.5" height="3.2" rx="0.5" transform="rotate(90)"/><rect x="-1.25" y="-5.4" width="2.5" height="3.2" rx="0.5" transform="rotate(135)"/><rect x="-1.25" y="-5.4" width="2.5" height="3.2" rx="0.5" transform="rotate(180)"/><rect x="-1.25" y="-5.4" width="2.5" height="3.2" rx="0.5" transform="rotate(225)"/><rect x="-1.25" y="-5.4" width="2.5" height="3.2" rx="0.5" transform="rotate(270)"/><rect x="-1.25" y="-5.4" width="2.5" height="3.2" rx="0.5" transform="rotate(315)"/><circle r="3.9"/></g><circle r="1.6" fill="#ececec"/></svg></div><div class="cond" style="left:1044px;top:591px"><span>Условие</span><svg class="gi" style="left:172.5px;top:3.0px" width="13.0" height="13.0" viewBox="-6 -6 12 12"><g fill="#c2baa8"><rect x="-1.25" y="-5.4" width="2.5" height="3.2" rx="0.5" transform="rotate(0)"/><rect x="-1.25" y="-5.4" width="2.5" height="3.2" rx="0.5" transform="rotate(45)"/><rect x="-1.25" y="-5.4" width="2.5" height="3.2" rx="0.5" transform="rotate(90)"/><rect x="-1.25" y="-5.4" width="2.5" height="3.2" rx="0.5" transform="rotate(135)"/><rect x="-1.25" y="-5.4" width="2.5" height="3.2" rx="0.5" transform="rotate(180)"/><rect x="-1.25" y="-5.4" width="2.5" height="3.2" rx="0.5" transform="rotate(225)"/><rect x="-1.25" y="-5.4" width="2.5" height="3.2" rx="0.5" transform="rotate(270)"/><rect x="-1.25" y="-5.4" width="2.5" height="3.2" rx="0.5" transform="rotate(315)"/><circle r="3.9"/></g><circle r="1.6" fill="#ececec"/></svg></div><div class="box" style="left:605px;top:656px"><div class="bh"><s style="left:5px"></s><s style="left:9px"></s><s style="left:13px"></s><s style="left:17px"></s><svg class="gi" style="left:135px;top:3px" width="12" height="12" viewBox="-6 -6 12 12"><g fill="#8c7240"><rect x="-1.25" y="-5.4" width="2.5" height="3.2" rx="0.5" transform="rotate(0)"/><rect x="-1.25" y="-5.4" width="2.5" height="3.2" rx="0.5" transform="rotate(45)"/><rect x="-1.25" y="-5.4" width="2.5" height="3.2" rx="0.5" transform="rotate(90)"/><rect x="-1.25" y="-5.4" width="2.5" height="3.2" rx="0.5" transform="rotate(135)"/><rect x="-1.25" y="-5.4" width="2.5" height="3.2" rx="0.5" transform="rotate(180)"/><rect x="-1.25" y="-5.4" width="2.5" height="3.2" rx="0.5" transform="rotate(225)"/><rect x="-1.25" y="-5.4" width="2.5" height="3.2" rx="0.5" transform="rotate(270)"/><rect x="-1.25" y="-5.4" width="2.5" height="3.2" rx="0.5" transform="rotate(315)"/><circle r="3.9"/></g><circle r="1.6" fill="#fad187"/></svg><svg class="cl" width="11" height="11" viewBox="0 0 11 11"><path d="M1.5 1.5 L9.5 9.5 M9.5 1.5 L1.5 9.5" stroke="#86703f" stroke-width="2"/></svg></div><div class="bb"></div><i class="ic-blue"><b></b></i><div class="bt">Прерывание процесса</div></div><div class="box" style="left:829px;top:865px"><div class="bh"><s style="left:5px"></s><s style="left:9px"></s><s style="left:13px"></s><s style="left:17px"></s><svg class="gi" style="left:135px;top:3px" width="12" height="12" viewBox="-6 -6 12 12"><g fill="#8c7240"><rect x="-1.25" y="-5.4" width="2.5" height="3.2" rx="0.5" transform="rotate(0)"/><rect x="-1.25" y="-5.4" width="2.5" height="3.2" rx="0.5" transform="rotate(45)"/><rect x="-1.25" y="-5.4" width="2.5" height="3.2" rx="0.5" transform="rotate(90)"/><rect x="-1.25" y="-5.4" width="2.5" height="3.2" rx="0.5" transform="rotate(135)"/><rect x="-1.25" y="-5.4" width="2.5" height="3.2" rx="0.5" transform="rotate(180)"/><rect x="-1.25" y="-5.4" width="2.5" height="3.2" rx="0.5" transform="rotate(225)"/><rect x="-1.25" y="-5.4" width="2.5" height="3.2" rx="0.5" transform="rotate(270)"/><rect x="-1.25" y="-5.4" width="2.5" height="3.2" rx="0.5" transform="rotate(315)"/><circle r="3.9"/></g><circle r="1.6" fill="#fad187"/></svg><svg class="cl" width="11" height="11" viewBox="0 0 11 11"><path d="M1.5 1.5 L9.5 9.5 M9.5 1.5 L1.5 9.5" stroke="#86703f" stroke-width="2"/></svg></div><div class="bb"></div><svg class="ic" style="left:9px;top:25px" width="18" height="18" viewBox="0 0 18 18"><path d="M0.7 1.7 H9 L11.3 4 V16.1 H0.7 Z" fill="#fff" stroke="#2f95f5" stroke-width="1.3"/><path d="M1.4 12.5 H10.6 V15.4 H1.4 Z" fill="#e3f1fc"/><path d="M2.2 7.4 H7.7 M2.2 9.4 H6 M2.2 11.4 H6" stroke="#8ec0ea" stroke-width="0.9"/><path d="M15.6 4.4 L5.6 14.2" stroke="#1d1608" stroke-width="3.6" stroke-linecap="butt"/><path d="M15.5 4.5 L5.8 14" stroke="#c99a1a" stroke-width="2.3"/><path d="M7.2 12.6 L5.6 14.2" stroke="#f3cc20" stroke-width="2.3"/><circle cx="4.8" cy="14.9" r="0.9" fill="#1d1608"/></svg><div class="bt">Стадия На доработку руководителю</div></div><div class="box" style="left:829px;top:956px"><div class="bh"><s style="left:5px"></s><s style="left:9px"></s><s style="left:13px"></s><s style="left:17px"></s><svg class="gi" style="left:135px;top:3px" width="12" height="12" viewBox="-6 -6 12 12"><g fill="#8c7240"><rect x="-1.25" y="-5.4" width="2.5" height="3.2" rx="0.5" transform="rotate(0)"/><rect x="-1.25" y="-5.4" width="2.5" height="3.2" rx="0.5" transform="rotate(45)"/><rect x="-1.25" y="-5.4" width="2.5" height="3.2" rx="0.5" transform="rotate(90)"/><rect x="-1.25" y="-5.4" width="2.5" height="3.2" rx="0.5" transform="rotate(135)"/><rect x="-1.25" y="-5.4" width="2.5" height="3.2" rx="0.5" transform="rotate(180)"/><rect x="-1.25" y="-5.4" width="2.5" height="3.2" rx="0.5" transform="rotate(225)"/><rect x="-1.25" y="-5.4" width="2.5" height="3.2" rx="0.5" transform="rotate(270)"/><rect x="-1.25" y="-5.4" width="2.5" height="3.2" rx="0.5" transform="rotate(315)"/><circle r="3.9"/></g><circle r="1.6" fill="#fad187"/></svg><svg class="cl" width="11" height="11" viewBox="0 0 11 11"><path d="M1.5 1.5 L9.5 9.5 M9.5 1.5 L1.5 9.5" stroke="#86703f" stroke-width="2"/></svg></div><div class="bb"></div><i class="ic-blue"><b></b></i><div class="bt">Запуск БП - Выбор руководителя филиала и отдела</div></div><div class="box" style="left:829px;top:1047px"><div class="bh"><s style="left:5px"></s><s style="left:9px"></s><s style="left:13px"></s><s style="left:17px"></s><u class="mn"></u><svg class="gi" style="left:135px;top:3px" width="12" height="12" viewBox="-6 -6 12 12"><g fill="#8c7240"><rect x="-1.25" y="-5.4" width="2.5" height="3.2" rx="0.5" transform="rotate(0)"/><rect x="-1.25" y="-5.4" width="2.5" height="3.2" rx="0.5" transform="rotate(45)"/><rect x="-1.25" y="-5.4" width="2.5" height="3.2" rx="0.5" transform="rotate(90)"/><rect x="-1.25" y="-5.4" width="2.5" height="3.2" rx="0.5" transform="rotate(135)"/><rect x="-1.25" y="-5.4" width="2.5" height="3.2" rx="0.5" transform="rotate(180)"/><rect x="-1.25" y="-5.4" width="2.5" height="3.2" rx="0.5" transform="rotate(225)"/><rect x="-1.25" y="-5.4" width="2.5" height="3.2" rx="0.5" transform="rotate(270)"/><rect x="-1.25" y="-5.4" width="2.5" height="3.2" rx="0.5" transform="rotate(315)"/><circle r="3.9"/></g><circle r="1.6" fill="#fad187"/></svg><svg class="cl" width="11" height="11" viewBox="0 0 11 11"><path d="M1.5 1.5 L9.5 9.5 M9.5 1.5 L1.5 9.5" stroke="#86703f" stroke-width="2"/></svg></div><div class="bb"></div><svg class="ic" style="left:6px;top:26px" width="15" height="13" viewBox="0 0 15 13"><path d="M1.5 3.5 V2 Q1.5 0.8 2.7 0.8 H6 L7 2 H12.5 Q13.8 2 13.8 3.3 V11 Q13.8 12.3 12.5 12.3 H2.7 Q1.5 12.3 1.5 11 Z" fill="#eaf7e6" stroke="#4cb84a" stroke-width="1.3"/><path d="M1.5 3.6 H13.8" stroke="#4cb84a" stroke-width="1"/><rect x="6.6" y="5" width="2" height="1.4" fill="#777"/><rect x="4" y="8" width="2" height="1.4" fill="#777"/><rect x="9" y="8" width="2" height="1.4" fill="#777"/></svg><div class="bt">Инициатор из отдел по ключевым клиентам</div></div><div class="box" style="left:829px;top:1138px"><div class="bh"><s style="left:5px"></s><s style="left:9px"></s><s style="left:13px"></s><s style="left:17px"></s><u class="mn"></u><svg class="gi" style="left:135px;top:3px" width="12" height="12" viewBox="-6 -6 12 12"><g fill="#8c7240"><rect x="-1.25" y="-5.4" width="2.5" height="3.2" rx="0.5" transform="rotate(0)"/><rect x="-1.25" y="-5.4" width="2.5" height="3.2" rx="0.5" transform="rotate(45)"/><rect x="-1.25" y="-5.4" width="2.5" height="3.2" rx="0.5" transform="rotate(90)"/><rect x="-1.25" y="-5.4" width="2.5" height="3.2" rx="0.5" transform="rotate(135)"/><rect x="-1.25" y="-5.4" width="2.5" height="3.2" rx="0.5" transform="rotate(180)"/><rect x="-1.25" y="-5.4" width="2.5" height="3.2" rx="0.5" transform="rotate(225)"/><rect x="-1.25" y="-5.4" width="2.5" height="3.2" rx="0.5" transform="rotate(270)"/><rect x="-1.25" y="-5.4" width="2.5" height="3.2" rx="0.5" transform="rotate(315)"/><circle r="3.9"/></g><circle r="1.6" fill="#fad187"/></svg><svg class="cl" width="11" height="11" viewBox="0 0 11 11"><path d="M1.5 1.5 L9.5 9.5 M9.5 1.5 L1.5 9.5" stroke="#86703f" stroke-width="2"/></svg></div><div class="bb"></div><svg class="ic" style="left:6px;top:23px" width="20" height="16" viewBox="0 0 20 16"><path d="M1.6 7.5 V13.3 M18.2 7.5 V13.3 M1.6 7.5 H4 M16 7.5 H18.2" stroke="#444" stroke-width="1" fill="none"/><path d="M0 12.2 L1.6 14.3 L3.2 12.2 Z M16.6 12.2 L18.2 14.3 L19.8 12.2 Z" fill="#444"/><path d="M10 1 L16.5 7.5 L10 14 L3.5 7.5 Z" fill="#fff200" stroke="#e0221a" stroke-width="1.1"/><text x="10" y="10.9" font-size="9" font-weight="bold" font-family="Liberation Sans" text-anchor="middle" fill="#222">?</text></svg><div class="bt bt2">Инициатор из отдел по ключевым клиентам?</div><svg class="pl" style="top:21.0px" width="15" height="15" viewBox="0 0 15 15"><circle cx="7.5" cy="7.5" r="6.5" fill="#fff" stroke="#d0d0d0" stroke-width="1.2"/><path d="M7.5 3.5 V11.5 M3.5 7.5 H11.5" stroke="#d04040" stroke-width="1.8"/></svg></div><div class="cond" style="left:595px;top:1204px"><span>да</span><svg class="gi" style="left:172.5px;top:3.0px" width="13.0" height="13.0" viewBox="-6 -6 12 12"><g fill="#c2baa8"><rect x="-1.25" y="-5.4" width="2.5" height="3.2" rx="0.5" transform="rotate(0)"/><rect x="-1.25" y="-5.4" width="2.5" height="3.2" rx="0.5" transform="rotate(45)"/><rect x="-1.25" y="-5.4" width="2.5" height="3.2" rx="0.5" transform="rotate(90)"/><rect x="-1.25" y="-5.4" width="2.5" height="3.2" rx="0.5" transform="rotate(135)"/><rect x="-1.25" y="-5.4" width="2.5" height="3.2" rx="0.5" transform="rotate(180)"/><rect x="-1.25" y="-5.4" width="2.5" height="3.2" rx="0.5" transform="rotate(225)"/><rect x="-1.25" y="-5.4" width="2.5" height="3.2" rx="0.5" transform="rotate(270)"/><rect x="-1.25" y="-5.4" width="2.5" height="3.2" rx="0.5" transform="rotate(315)"/><circle r="3.9"/></g><circle r="1.6" fill="#ececec"/></svg></div><div class="cond" style="left:1044px;top:1204px"><span>нет</span><svg class="gi" style="left:172.5px;top:3.0px" width="13.0" height="13.0" viewBox="-6 -6 12 12"><g fill="#c2baa8"><rect x="-1.25" y="-5.4" width="2.5" height="3.2" rx="0.5" transform="rotate(0)"/><rect x="-1.25" y="-5.4" width="2.5" height="3.2" rx="0.5" transform="rotate(45)"/><rect x="-1.25" y="-5.4" width="2.5" height="3.2" rx="0.5" transform="rotate(90)"/><rect x="-1.25" y="-5.4" width="2.5" height="3.2" rx="0.5" transform="rotate(135)"/><rect x="-1.25" y="-5.4" width="2.5" height="3.2" rx="0.5" transform="rotate(180)"/><rect x="-1.25" y="-5.4" width="2.5" height="3.2" rx="0.5" transform="rotate(225)"/><rect x="-1.25" y="-5.4" width="2.5" height="3.2" rx="0.5" transform="rotate(270)"/><rect x="-1.25" y="-5.4" width="2.5" height="3.2" rx="0.5" transform="rotate(315)"/><circle r="3.9"/></g><circle r="1.6" fill="#ececec"/></svg></div><div class="box" style="left:605px;top:1269px"><div class="bh"><s style="left:5px"></s><s style="left:9px"></s><s style="left:13px"></s><s style="left:17px"></s><svg class="gi" style="left:135px;top:3px" width="12" height="12" viewBox="-6 -6 12 12"><g fill="#8c7240"><rect x="-1.25" y="-5.4" width="2.5" height="3.2" rx="0.5" transform="rotate(0)"/><rect x="-1.25" y="-5.4" width="2.5" height="3.2" rx="0.5" transform="rotate(45)"/><rect x="-1.25" y="-5.4" width="2.5" height="3.2" rx="0.5" transform="rotate(90)"/><rect x="-1.25" y="-5.4" width="2.5" height="3.2" rx="0.5" transform="rotate(135)"/><rect x="-1.25" y="-5.4" width="2.5" height="3.2" rx="0.5" transform="rotate(180)"/><rect x="-1.25" y="-5.4" width="2.5" height="3.2" rx="0.5" transform="rotate(225)"/><rect x="-1.25" y="-5.4" width="2.5" height="3.2" rx="0.5" transform="rotate(270)"/><rect x="-1.25" y="-5.4" width="2.5" height="3.2" rx="0.5" transform="rotate(315)"/><circle r="3.9"/></g><circle r="1.6" fill="#fad187"/></svg><svg class="cl" width="11" height="11" viewBox="0 0 11 11"><path d="M1.5 1.5 L9.5 9.5 M9.5 1.5 L1.5 9.5" stroke="#86703f" stroke-width="2"/></svg></div><div class="bb"></div><svg class="ic" style="left:7px;top:27px" width="19" height="12" viewBox="0 0 19 12"><rect x="0.5" y="0.5" width="18" height="11" fill="#fff" stroke="#444" stroke-width="1"/><text x="2.2" y="9.3" font-size="9" font-weight="bold" font-family="Liberation Sans" fill="#111">$</text><text x="9" y="6" font-size="5" font-family="Liberation Sans" fill="#555">A</text><text x="12.5" y="10" font-size="6" font-family="Liberation Sans" fill="#333">b</text></svg><div class="bt">Изменение переменных</div></div><div class="box" style="left:1054px;top:1269px"><div class="bh"><s style="left:5px"></s><s style="left:9px"></s><s style="left:13px"></s><s style="left:17px"></s><svg class="gi" style="left:135px;top:3px" width="12" height="12" viewBox="-6 -6 12 12"><g fill="#8c7240"><rect x="-1.25" y="-5.4" width="2.5" height="3.2" rx="0.5" transform="rotate(0)"/><rect x="-1.25" y="-5.4" width="2.5" height="3.2" rx="0.5" transform="rotate(45)"/><rect x="-1.25" y="-5.4" width="2.5" height="3.2" rx="0.5" transform="rotate(90)"/><rect x="-1.25" y="-5.4" width="2.5" height="3.2" rx="0.5" transform="rotate(135)"/><rect x="-1.25" y="-5.4" width="2.5" height="3.2" rx="0.5" transform="rotate(180)"/><rect x="-1.25" y="-5.4" width="2.5" height="3.2" rx="0.5" transform="rotate(225)"/><rect x="-1.25" y="-5.4" width="2.5" height="3.2" rx="0.5" transform="rotate(270)"/><rect x="-1.25" y="-5.4" width="2.5" height="3.2" rx="0.5" transform="rotate(315)"/><circle r="3.9"/></g><circle r="1.6" fill="#fad187"/></svg><svg class="cl" width="11" height="11" viewBox="0 0 11 11"><path d="M1.5 1.5 L9.5 9.5 M9.5 1.5 L1.5 9.5" stroke="#86703f" stroke-width="2"/></svg></div><div class="bb"></div><svg class="ic" style="left:7px;top:27px" width="19" height="12" viewBox="0 0 19 12"><rect x="0.5" y="0.5" width="18" height="11" fill="#fff" stroke="#444" stroke-width="1"/><text x="2.2" y="9.3" font-size="9" font-weight="bold" font-family="Liberation Sans" fill="#111">$</text><text x="9" y="6" font-size="5" font-family="Liberation Sans" fill="#555">A</text><text x="12.5" y="10" font-size="6" font-family="Liberation Sans" fill="#333">b</text></svg><div class="bt">Изменение переменных</div></div><div class="box" style="left:829px;top:1478px"><div class="bh"><s style="left:5px"></s><s style="left:9px"></s><s style="left:13px"></s><s style="left:17px"></s><u class="mn"></u><svg class="gi" style="left:135px;top:3px" width="12" height="12" viewBox="-6 -6 12 12"><g fill="#8c7240"><rect x="-1.25" y="-5.4" width="2.5" height="3.2" rx="0.5" transform="rotate(0)"/><rect x="-1.25" y="-5.4" width="2.5" height="3.2" rx="0.5" transform="rotate(45)"/><rect x="-1.25" y="-5.4" width="2.5" height="3.2" rx="0.5" transform="rotate(90)"/><rect x="-1.25" y="-5.4" width="2.5" height="3.2" rx="0.5" transform="rotate(135)"/><rect x="-1.25" y="-5.4" width="2.5" height="3.2" rx="0.5" transform="rotate(180)"/><rect x="-1.25" y="-5.4" width="2.5" height="3.2" rx="0.5" transform="rotate(225)"/><rect x="-1.25" y="-5.4" width="2.5" height="3.2" rx="0.5" transform="rotate(270)"/><rect x="-1.25" y="-5.4" width="2.5" height="3.2" rx="0.5" transform="rotate(315)"/><circle r="3.9"/></g><circle r="1.6" fill="#fad187"/></svg><svg class="cl" width="11" height="11" viewBox="0 0 11 11"><path d="M1.5 1.5 L9.5 9.5 M9.5 1.5 L1.5 9.5" stroke="#86703f" stroke-width="2"/></svg></div><div class="bb"></div><svg class="ic" style="left:6px;top:23px" width="20" height="16" viewBox="0 0 20 16"><defs><linearGradient id="pg" x1="0" y1="0" x2="0" y2="1"><stop offset="0" stop-color="#c4f5b0"/><stop offset="1" stop-color="#7fd86a"/></linearGradient></defs><path d="M1.5 6.3 V12.4 M17.4 6.3 V12.4" stroke="#444" stroke-width="1.1" fill="none"/><path d="M1.5 6.3 H4.2 M15 6.3 H17.4" stroke="#3a9a30" stroke-width="0.9" fill="none"/><path d="M0 11.3 L1.5 13.2 L3 11.3 Z M15.9 11.3 L17.4 13.2 L18.9 11.3 Z" fill="#444"/><rect x="4.6" y="1.5" width="9.9" height="9.8" rx="1.2" fill="url(#pg)" stroke="#2aa820" stroke-width="1.1"/><path d="M7 6.3 H11 M9.4 4.2 L11.8 6.3 L9.4 8.4 Z" stroke="#146a10" stroke-width="1.3" fill="#146a10" stroke-linejoin="round"/></svg><div class="bt bt2">Параллельное выполнение</div><svg class="pl" style="top:21.0px" width="15" height="15" viewBox="0 0 15 15"><circle cx="7.5" cy="7.5" r="6.5" fill="#fff" stroke="#d0d0d0" stroke-width="1.2"/><path d="M7.5 3.5 V11.5 M3.5 7.5 H11.5" stroke="#d04040" stroke-width="1.8"/></svg></div><div class="box" style="left:499px;top:1579px"><div class="bh"><s style="left:5px"></s><s style="left:9px"></s><s style="left:13px"></s><s style="left:17px"></s><svg class="gi" style="left:135px;top:3px" width="12" height="12" viewBox="-6 -6 12 12"><g fill="#8c7240"><rect x="-1.25" y="-5.4" width="2.5" height="3.2" rx="0.5" transform="rotate(0)"/><rect x="-1.25" y="-5.4" width="2.5" height="3.2" rx="0.5" transform="rotate(45)"/><rect x="-1.25" y="-5.4" width="2.5" height="3.2" rx="0.5" transform="rotate(90)"/><rect x="-1.25" y="-5.4" width="2.5" height="3.2" rx="0.5" transform="rotate(135)"/><rect x="-1.25" y="-5.4" width="2.5" height="3.2" rx="0.5" transform="rotate(180)"/><rect x="-1.25" y="-5.4" width="2.5" height="3.2" rx="0.5" transform="rotate(225)"/><rect x="-1.25" y="-5.4" width="2.5" height="3.2" rx="0.5" transform="rotate(270)"/><rect x="-1.25" y="-5.4" width="2.5" height="3.2" rx="0.5" transform="rotate(315)"/><circle r="3.9"/></g><circle r="1.6" fill="#fad187"/></svg><svg class="cl" width="11" height="11" viewBox="0 0 11 11"><path d="M1.5 1.5 L9.5 9.5 M9.5 1.5 L1.5 9.5" stroke="#86703f" stroke-width="2"/></svg></div><div class="bb"></div><i class="ic-blue"><b></b></i><div class="bt">Необходимо отработать замечания служб</div></div><div class="box" style="left:499px;top:1670px"><div class="bh"><s style="left:5px"></s><s style="left:9px"></s><s style="left:13px"></s><s style="left:17px"></s><svg class="gi" style="left:135px;top:3px" width="12" height="12" viewBox="-6 -6 12 12"><g fill="#8c7240"><rect x="-1.25" y="-5.4" width="2.5" height="3.2" rx="0.5" transform="rotate(0)"/><rect x="-1.25" y="-5.4" width="2.5" height="3.2" rx="0.5" transform="rotate(45)"/><rect x="-1.25" y="-5.4" width="2.5" height="3.2" rx="0.5" transform="rotate(90)"/><rect x="-1.25" y="-5.4" width="2.5" height="3.2" rx="0.5" transform="rotate(135)"/><rect x="-1.25" y="-5.4" width="2.5" height="3.2" rx="0.5" transform="rotate(180)"/><rect x="-1.25" y="-5.4" width="2.5" height="3.2" rx="0.5" transform="rotate(225)"/><rect x="-1.25" y="-5.4" width="2.5" height="3.2" rx="0.5" transform="rotate(270)"/><rect x="-1.25" y="-5.4" width="2.5" height="3.2" rx="0.5" transform="rotate(315)"/><circle r="3.9"/></g><circle r="1.6" fill="#fad187"/></svg><svg class="cl" width="11" height="11" viewBox="0 0 11 11"><path d="M1.5 1.5 L9.5 9.5 M9.5 1.5 L1.5 9.5" stroke="#86703f" stroke-width="2"/></svg></div><div class="bb"></div><i class="ic-blue"><b></b></i><div class="bt">Добавить комментарий текст 19</div></div><div class="box" style="left:499px;top:1761px"><div class="bh"><s style="left:5px"></s><s style="left:9px"></s><s style="left:13px"></s><s style="left:17px"></s><svg class="gi" style="left:135px;top:3px" width="12" height="12" viewBox="-6 -6 12 12"><g fill="#8c7240"><rect x="-1.25" y="-5.4" width="2.5" height="3.2" rx="0.5" transform="rotate(0)"/><rect x="-1.25" y="-5.4" width="2.5" height="3.2" rx="0.5" transform="rotate(45)"/><rect x="-1.25" y="-5.4" width="2.5" height="3.2" rx="0.5" transform="rotate(90)"/><rect x="-1.25" y="-5.4" width="2.5" height="3.2" rx="0.5" transform="rotate(135)"/><rect x="-1.25" y="-5.4" width="2.5" height="3.2" rx="0.5" transform="rotate(180)"/><rect x="-1.25" y="-5.4" width="2.5" height="3.2" rx="0.5" transform="rotate(225)"/><rect x="-1.25" y="-5.4" width="2.5" height="3.2" rx="0.5" transform="rotate(270)"/><rect x="-1.25" y="-5.4" width="2.5" height="3.2" rx="0.5" transform="rotate(315)"/><circle r="3.9"/></g><circle r="1.6" fill="#fad187"/></svg><svg class="cl" width="11" height="11" viewBox="0 0 11 11"><path d="M1.5 1.5 L9.5 9.5 M9.5 1.5 L1.5 9.5" stroke="#86703f" stroke-width="2"/></svg></div><div class="bb"></div><i class="ic-blue"><b></b></i><div class="bt">Запуск БП - Кредитный комитет. Проверка службами</div></div><div class="box" style="left:499px;top:1852px"><div class="bh"><s style="left:5px"></s><s style="left:9px"></s><s style="left:13px"></s><s style="left:17px"></s><svg class="gi" style="left:135px;top:3px" width="12" height="12" viewBox="-6 -6 12 12"><g fill="#8c7240"><rect x="-1.25" y="-5.4" width="2.5" height="3.2" rx="0.5" transform="rotate(0)"/><rect x="-1.25" y="-5.4" width="2.5" height="3.2" rx="0.5" transform="rotate(45)"/><rect x="-1.25" y="-5.4" width="2.5" height="3.2" rx="0.5" transform="rotate(90)"/><rect x="-1.25" y="-5.4" width="2.5" height="3.2" rx="0.5" transform="rotate(135)"/><rect x="-1.25" y="-5.4" width="2.5" height="3.2" rx="0.5" transform="rotate(180)"/><rect x="-1.25" y="-5.4" width="2.5" height="3.2" rx="0.5" transform="rotate(225)"/><rect x="-1.25" y="-5.4" width="2.5" height="3.2" rx="0.5" transform="rotate(270)"/><rect x="-1.25" y="-5.4" width="2.5" height="3.2" rx="0.5" transform="rotate(315)"/><circle r="3.9"/></g><circle r="1.6" fill="#fad187"/></svg><svg class="cl" width="11" height="11" viewBox="0 0 11 11"><path d="M1.5 1.5 L9.5 9.5 M9.5 1.5 L1.5 9.5" stroke="#86703f" stroke-width="2"/></svg></div><div class="bb"></div><i class="ic-blue"><b></b></i><div class="bt">Прерывание процесса</div></div><div class="box" style="left:1158px;top:1579px"><div class="bh"><s style="left:5px"></s><s style="left:9px"></s><s style="left:13px"></s><s style="left:17px"></s><svg class="gi" style="left:135px;top:3px" width="12" height="12" viewBox="-6 -6 12 12"><g fill="#8c7240"><rect x="-1.25" y="-5.4" width="2.5" height="3.2" rx="0.5" transform="rotate(0)"/><rect x="-1.25" y="-5.4" width="2.5" height="3.2" rx="0.5" transform="rotate(45)"/><rect x="-1.25" y="-5.4" width="2.5" height="3.2" rx="0.5" transform="rotate(90)"/><rect x="-1.25" y="-5.4" width="2.5" height="3.2" rx="0.5" transform="rotate(135)"/><rect x="-1.25" y="-5.4" width="2.5" height="3.2" rx="0.5" transform="rotate(180)"/><rect x="-1.25" y="-5.4" width="2.5" height="3.2" rx="0.5" transform="rotate(225)"/><rect x="-1.25" y="-5.4" width="2.5" height="3.2" rx="0.5" transform="rotate(270)"/><rect x="-1.25" y="-5.4" width="2.5" height="3.2" rx="0.5" transform="rotate(315)"/><circle r="3.9"/></g><circle r="1.6" fill="#fad187"/></svg><svg class="cl" width="11" height="11" viewBox="0 0 11 11"><path d="M1.5 1.5 L9.5 9.5 M9.5 1.5 L1.5 9.5" stroke="#86703f" stroke-width="2"/></svg></div><div class="bb"></div><svg class="ic" style="left:7.5px;top:28px" width="15" height="11" viewBox="0 0 15 11"><rect x="0.7" y="0.7" width="13.6" height="9.6" rx="1.5" fill="#f0fdec" stroke="#2aa810" stroke-width="1.3"/><rect x="4.7" y="2.9" width="1.8" height="5" fill="#222"/><rect x="8.1" y="2.9" width="1.8" height="5" fill="#222"/></svg><div class="bt">30 дней</div></div><div class="box" style="left:1158px;top:1670px"><div class="bh"><s style="left:5px"></s><s style="left:9px"></s><s style="left:13px"></s><s style="left:17px"></s><svg class="gi" style="left:135px;top:3px" width="12" height="12" viewBox="-6 -6 12 12"><g fill="#8c7240"><rect x="-1.25" y="-5.4" width="2.5" height="3.2" rx="0.5" transform="rotate(0)"/><rect x="-1.25" y="-5.4" width="2.5" height="3.2" rx="0.5" transform="rotate(45)"/><rect x="-1.25" y="-5.4" width="2.5" height="3.2" rx="0.5" transform="rotate(90)"/><rect x="-1.25" y="-5.4" width="2.5" height="3.2" rx="0.5" transform="rotate(135)"/><rect x="-1.25" y="-5.4" width="2.5" height="3.2" rx="0.5" transform="rotate(180)"/><rect x="-1.25" y="-5.4" width="2.5" height="3.2" rx="0.5" transform="rotate(225)"/><rect x="-1.25" y="-5.4" width="2.5" height="3.2" rx="0.5" transform="rotate(270)"/><rect x="-1.25" y="-5.4" width="2.5" height="3.2" rx="0.5" transform="rotate(315)"/><circle r="3.9"/></g><circle r="1.6" fill="#fad187"/></svg><svg class="cl" width="11" height="11" viewBox="0 0 11 11"><path d="M1.5 1.5 L9.5 9.5 M9.5 1.5 L1.5 9.5" stroke="#86703f" stroke-width="2"/></svg></div><div class="bb"></div><i class="ic-blue"><b></b></i><div class="bt">Запуск БП - Вынесение на КК</div></div><div class="box" style="left:1158px;top:1761px"><div class="bh"><s style="left:5px"></s><s style="left:9px"></s><s style="left:13px"></s><s style="left:17px"></s><svg class="gi" style="left:135px;top:3px" width="12" height="12" viewBox="-6 -6 12 12"><g fill="#8c7240"><rect x="-1.25" y="-5.4" width="2.5" height="3.2" rx="0.5" transform="rotate(0)"/><rect x="-1.25" y="-5.4" width="2.5" height="3.2" rx="0.5" transform="rotate(45)"/><rect x="-1.25" y="-5.4" width="2.5" height="3.2" rx="0.5" transform="rotate(90)"/><rect x="-1.25" y="-5.4" width="2.5" height="3.2" rx="0.5" transform="rotate(135)"/><rect x="-1.25" y="-5.4" width="2.5" height="3.2" rx="0.5" transform="rotate(180)"/><rect x="-1.25" y="-5.4" width="2.5" height="3.2" rx="0.5" transform="rotate(225)"/><rect x="-1.25" y="-5.4" width="2.5" height="3.2" rx="0.5" transform="rotate(270)"/><rect x="-1.25" y="-5.4" width="2.5" height="3.2" rx="0.5" transform="rotate(315)"/><circle r="3.9"/></g><circle r="1.6" fill="#fad187"/></svg><svg class="cl" width="11" height="11" viewBox="0 0 11 11"><path d="M1.5 1.5 L9.5 9.5 M9.5 1.5 L1.5 9.5" stroke="#86703f" stroke-width="2"/></svg></div><div class="bb"></div><i class="ic-blue"><b></b></i><div class="bt">Прерывание процесса</div></div><div class="se" style="left:854px;top:1997px;height:23px;line-height:19px">Конец</div>

<!-- palette -->
<div id="pal">
 <div class="abs" style="left:186px;top:0;width:14px;height:561px;background:#f0f0f0"></div>
 <div class="abs" style="left:188.5px;top:6px;width:0;height:0;border-left:3.7px solid transparent;border-right:3.7px solid transparent;border-bottom:4px solid #a8a8a8"></div>
 <div class="abs" style="left:187px;top:15px;width:11px;height:393px;background:#bcbcbc"></div>
 <div class="pg" style="top:0">
  <div class="ph"><i></i>Обработка документа</div>
  <div class="pi"><span class="pic ic-blue" style="left:1px;top:6px"><b></b></span>Запуск бизнес-процесса</div>
  <div class="pi"><svg class="pic" style="left:3.3px;top:6.3px;width:18px;height:18px" width="18" height="18" viewBox="0 0 18 18"><path d="M0.7 1.7 H9 L11.3 4 V16.1 H0.7 Z" fill="#fff" stroke="#2f95f5" stroke-width="1.3"/><path d="M1.4 12.5 H10.6 V15.4 H1.4 Z" fill="#e3f1fc"/><path d="M2.2 7.4 H7.7 M2.2 9.4 H6 M2.2 11.4 H6" stroke="#8ec0ea" stroke-width="0.9"/><path d="M15.6 4.4 L5.6 14.2" stroke="#1d1608" stroke-width="3.6"/><path d="M15.5 4.5 L5.8 14" stroke="#c99a1a" stroke-width="2.3"/><path d="M7.2 12.6 L5.6 14.2" stroke="#f3cc20" stroke-width="2.3"/><circle cx="4.8" cy="14.9" r="0.9" fill="#1d1608"/></svg>Изменение документа</div>
  <div class="pi"><span class="pic ic-blue" style="left:1px;top:6px"><b></b></span>Изменение элемента списка</div>
  <div class="pi"><svg class="pic" style="left:-2px;top:3px;width:18px;height:22px" width="18" height="22" viewBox="0 0 18 22"><path d="M4.6 5.6 H12 L14.4 8 V20.2 H4.6 Z" fill="url(#ndg)" stroke="#2f95f5" stroke-width="1.3"/><defs><linearGradient id="ndg" x1="0" y1="0" x2="1" y2="1"><stop offset="0.4" stop-color="#fff"/><stop offset="1" stop-color="#d6ebfb"/></linearGradient></defs><path d="M6.3 11 H11.8 M6.3 13 H11.8 M6.3 15 H10" stroke="#8ec0ea" stroke-width="0.9"/><g stroke="#f02a0a" stroke-width="1.1" stroke-linecap="round"><path d="M1.2 5 H6.8 M4 2.2 V7.8 M2 3 L6 7 M6 3 L2 7"/></g><circle cx="4" cy="5" r="1.4" fill="#f02a0a"/></svg>Создание нового документа</div>
  <div class="pi"><span class="pic ic-blue" style="left:1px;top:6px"><b></b></span>Создание элемента списка</div>
  <div class="pi"><svg class="pic" style="top:8px;left:1px" width="16" height="16" viewBox="0 0 16 16"><path d="M1.5 1 H8 L10 3 V15 H1.5 Z" fill="#fff" stroke="#3b8ee0" stroke-width="1.2"/><path d="M3 6 H7 M3 9 H6" stroke="#9cc0e8"/><path d="M7.5 8.5 L14 14.5 M14 8.5 L7.5 14.5" stroke="#d81010" stroke-width="2.2"/></svg>Удаление документа</div>
  <div class="pi"><span class="pic ic-blue" style="left:1px;top:6px"><b></b></span>Чтение элемента списка</div>
 </div>
 <div class="pg" style="top:256px"><div class="ph"><i class="r"></i>Задания</div></div>
 <div class="pg" style="top:288px"><div class="ph"><i class="r"></i>Конструкции</div></div>
 <div class="pg" style="top:320px;border-bottom:0">
  <div class="ph"><i></i>Уведомления</div>
  <div class="pi"><svg class="pic" style="top:7px;left:1px" width="14" height="12" viewBox="0 0 14 12"><rect x="0.5" y="0.5" width="13" height="11" fill="#fff" stroke="#888"/><rect x="0.5" y="0.5" width="13" height="2.5" fill="#f07a20"/><rect x="2" y="5" width="5" height="1.5" fill="#e02020"/><rect x="7" y="7.5" width="5" height="1.5" fill="#20a020"/></svg>График отсутствия</div>
  <div class="pi"><svg class="pic" style="top:5px;left:2px" width="13" height="15" viewBox="0 0 13 15"><rect x="0.5" y="1.5" width="12" height="13" rx="1" fill="#f7e89a" stroke="#b09040"/><rect x="3.5" y="0.5" width="6" height="2.5" rx="1" fill="#888"/><path d="M4 8 L6 10 L10 5" stroke="#333" stroke-width="1.2" fill="none"/></svg>Задача</div>
  <div class="pi"><span class="pic ic-blue" style="left:1px;top:6px"><b></b></span>Информационный звонок</div>
  <div class="pi"><span class="pic ic-blue" style="left:1px;top:6px"><b></b></span>Контроль</div>
  <div class="pi"><svg class="pic" style="top:10px;left:2px" width="16" height="12" viewBox="0 0 16 12"><rect x="0.7" y="0.7" width="14.6" height="10.6" fill="#f8ec90" stroke="#c09030" stroke-width="1.2"/><text x="8" y="9" text-anchor="middle" font-size="9" font-family="Liberation Sans" fill="#111">@</text></svg>Почтовое сообщение</div>
  <div class="pi"><svg class="pic" style="top:7px;left:1px" width="14" height="12" viewBox="0 0 14 12"><rect x="0.5" y="0.5" width="13" height="11" fill="#fff" stroke="#888"/><rect x="0.5" y="0.5" width="13" height="2.5" fill="#f07a20"/><text x="7" y="10" text-anchor="middle" font-size="7" font-weight="bold" font-family="Liberation Sans" fill="#111">1</text></svg>Событие календаря</div>
  <div class="pi"><svg class="pic" style="top:11px;left:3px" width="17" height="13" viewBox="0 0 17 13"><path d="M1.5 1.5 H15.5 V10.5 H9 L7.5 12 L6 10.5 H1.5 Z" fill="#fff" stroke="#111" stroke-width="2.2"/></svg>Сообщение в Живую ленту</div>
 </div>
</div>

<!-- footer -->
<div class="abs" style="left:255px;top:2030px;width:1517px;height:2px;background-image:linear-gradient(90deg,#e2e2e2 50%,transparent 50%);background-size:4px 2px"></div>
<div class="abs" style="left:184px;top:2089px;width:42px;height:42px;border-radius:50%;background:#d7dbdf"></div>
<svg class="abs" style="left:196px;top:2103px" width="18" height="10" viewBox="0 0 18 10"><path d="M2 8.5 L9 2 L16 8.5" stroke="#eef1f4" stroke-width="2.2" fill="none"/></svg>
<div class="ft" style="left:252px">© «Битрикс», 2019</div>
<div class="fsep" style="left:388px"></div>
<div class="ft" style="left:401px">Поддержка24</div>
<div class="fsep" style="left:505px"></div>
<div class="ft" style="left:519px">Темы</div>
<div class="fsep" style="left:565px"></div>
<div class="ft" style="left:578px">Печать</div>

</body></html>
